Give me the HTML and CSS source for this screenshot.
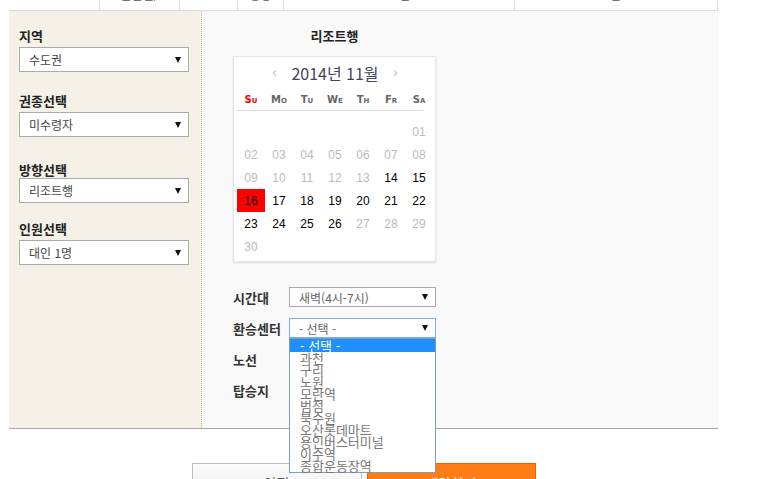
FILE: index.html
```html
<!DOCTYPE html>
<html lang="ko">

<head>
    <meta charset="UTF-8">
    <meta name="viewport" content="width=device-width, initial-scale=1.0">
    <title>리조트 셔틀 예약</title>
    <link rel="stylesheet" href="styles.css">
</head>

<body>
    <div class="page">
        <table class="summary">
            <tr>
                <td></td>
                <td>출발일/</td>
                <td></td>
                <td>방향</td>
                <td>노선</td>
                <td>요금표</td>
            </tr>
        </table>

        <div class="panel">
            <aside class="side">
                <div class="field">
                    <label>지역</label>
                    <div class="select"><span>수도권</span><i class="arrow"></i></div>
                </div>
                <div class="field">
                    <label>권종선택</label>
                    <div class="select"><span>미수령자</span><i class="arrow"></i></div>
                </div>
                <div class="field wide">
                    <label>방향선택</label>
                    <div class="select"><span>리조트행</span><i class="arrow"></i></div>
                </div>
                <div class="field last">
                    <label>인원선택</label>
                    <div class="select"><span>대인 1명</span><i class="arrow"></i></div>
                </div>
            </aside>

            <section class="main">
                <div class="cal-wrap">
                    <h3 class="cal-title">리조트행</h3>
                    <div class="calendar">
                        <div class="cal-head">
                            <span class="nav">&lsaquo;</span>
                            <span class="month">2014년 11월</span>
                            <span class="nav">&rsaquo;</span>
                        </div>
                        <div class="week">
                            <span class="sun">Su</span><span>Mo</span><span>Tu</span><span>We</span><span>Th</span><span>Fr</span><span>Sa</span>
                        </div>
                        <div class="days">
                            <span></span><span></span><span></span><span></span><span></span><span></span><span class="off">01</span>
                            <span class="off">02</span><span class="off">03</span><span class="off">04</span><span class="off">05</span><span class="off">06</span><span class="off">07</span><span class="off">08</span>
                            <span class="off">09</span><span class="off">10</span><span class="off">11</span><span class="off">12</span><span class="off">13</span><span>14</span><span>15</span>
                            <span class="picked">16</span><span>17</span><span>18</span><span>19</span><span>20</span><span>21</span><span>22</span>
                            <span>23</span><span>24</span><span>25</span><span>26</span><span class="off">27</span><span class="off">28</span><span class="off">29</span>
                            <span class="off">30</span>
                        </div>
                    </div>
                </div>

                <div class="form">
                    <div class="row">
                        <label>시간대</label>
                        <div class="select small"><span>새벽(4시-7시)</span><i class="arrow"></i></div>
                    </div>
                    <div class="row">
                        <label>환승센터</label>
                        <div class="select small focus"><span>- 선택 -</span><i class="arrow"></i>
                            <ul class="options">
                                <li class="hover">- 선택 -</li>
                                <li>과천</li>
                                <li>구리</li>
                                <li>노원</li>
                                <li>모란역</li>
                                <li>범점</li>
                                <li>북수원</li>
                                <li>오산롯데마트</li>
                                <li>용인버스터미널</li>
                                <li>이수역</li>
                                <li>종합운동장역</li>
                            </ul>
                        </div>
                    </div>
                    <div class="row">
                        <label>노선</label>
                        <div class="select small"><span>- 선택 -</span><i class="arrow"></i></div>
                    </div>
                    <div class="row">
                        <label>탑승지</label>
                        <div class="select small"><span>- 선택 -</span><i class="arrow"></i></div>
                    </div>
                </div>
            </section>
        </div>

        <div class="actions">
            <button class="btn">이전</button>
            <button class="btn primary">예약하기</button>
        </div>
    </div>
</body>

</html>
```

FILE: styles.css
```css
body,
ul,
h3 {
    margin: 0px;
    padding: 0px;
}

body {
    background: #fff;
    font-family: 'Noto Sans CJK KR', 'Noto Sans', sans-serif;
    color: #333;
}

.page {
    width: 709px;
    margin-left: 9px;
}

/* top summary table, scrolled mostly out of view */
.summary {
    width: 709px;
    height: 30px;
    margin-top: -19px;
    border-collapse: collapse;
    table-layout: fixed;
}

.summary td {
    border-right: 1px solid #ddd;
    border-bottom: 1px solid #ddd;
    vertical-align: bottom;
    padding: 0 0 7px;
    text-align: center;
    font-size: 12px;
    line-height: 16px;
    color: #555;
}

.summary td:nth-child(1) { width: 90px; }
.summary td:nth-child(2) { width: 79px; }
.summary td:nth-child(3) { width: 57px; }
.summary td:nth-child(4) { width: 45px; }
.summary td:nth-child(5) { width: 230px; }

.panel {
    display: flex;
    height: 417px;
    border-bottom: 1px solid #a6a6a6;
    background: #f9f9f9;
}

.side {
    width: 182px;
    padding: 17px 0 0 10px;
    background: #f5f1e7;
    border-right: 1px dotted #c6b79c;
}

.field label {
    display: block;
    font-size: 13px;
    font-weight: bold;
    line-height: 16px;
    color: #222;
    margin-bottom: 3px;
}

.field + .field {
    margin-top: 21px;
}

.field.wide {
    margin-top: 25px;
}

.field.wide label {
    margin-bottom: 0px;
}

.field.last {
    margin-top: 18px;
}

.select {
    position: relative;
    display: flex;
    align-items: center;
    justify-content: space-between;
    width: 170px;
    height: 25px;
    box-sizing: border-box;
    padding: 0 7px 0 9px;
    background: #fff;
    border: 1px solid #aaa;
    font-size: 12px;
    color: #444;
}

.arrow {
    width: 0;
    height: 0;
    border-left: 3px solid transparent;
    border-right: 3px solid transparent;
    border-top: 6px solid #111;
}

.main {
    flex: 1;
    padding: 17px 0 0 31px;
}

.cal-wrap {
    width: 203px;
}

.cal-title {
    text-align: center;
    font-size: 13px;
    line-height: 16px;
    color: #222;
    margin-bottom: 12px;
}

.calendar {
    box-sizing: border-box;
    width: 203px;
    height: 206px;
    padding: 0 2px 3px 3px;
    background: #fff;
    border: 1px solid #e6e6e6;
    box-shadow: 0 1px 2px rgba(0, 0, 0, 0.12);
}

.cal-head {
    display: flex;
    justify-content: center;
    align-items: center;
    gap: 14px;
    height: 32px;
}

.cal-head .nav {
    font-family: 'DejaVu Sans', sans-serif;
    font-size: 15px;
    color: #c4c4c4;
}

.cal-head .month {
    font-size: 16px;
    color: #48435a;
}

.week,
.days {
    display: grid;
    grid-template-columns: repeat(7, 28px);
}

.week {
    height: 20px;
    align-items: center;
    padding-bottom: 1px;
    border-bottom: 1px solid #ddd;
    margin: 0 10px 0 0;
}

.week span {
    text-align: center;
    font-family: 'DejaVu Sans', sans-serif;
    font-size: 10px;
    font-weight: bold;
    font-variant: small-caps;
    color: #666;
}

.week .sun {
    color: #f00;
}

.days {
    margin-top: 9px;
    grid-auto-rows: 23px;
}

.days span {
    display: flex;
    align-items: center;
    justify-content: center;
    font-family: 'Liberation Sans', sans-serif;
    font-size: 12px;
    color: #000;
}

.days .off {
    color: #bbb;
}

.days .picked {
    background: #f00;
}

.form {
    margin-top: 25px;
}

.row {
    display: flex;
    align-items: center;
    height: 20px;
}

.row + .row {
    margin-top: 11px;
}

.row label {
    width: 56px;
    font-size: 13px;
    font-weight: bold;
    color: #333;
}

.select.small {
    width: 147px;
    height: 20px;
    color: #666;
}

.select.focus {
    border-color: #7eaee6;
}

.options {
    position: absolute;
    top: 19px;
    left: -1px;
    width: 147px;
    box-sizing: border-box;
    list-style: none;
    background: #fff;
    border: 1px solid #7f9db9;
    z-index: 2;
}

.options li {
    height: 12px;
    line-height: 12px;
    padding-left: 10px;
    font-size: 13px;
    color: #777;
    white-space: nowrap;
}

.options li.hover {
    height: 13px;
    line-height: 14px;
    background: #1e90ff;
    color: #fff;
}

.actions {
    display: flex;
    justify-content: center;
    gap: 5px;
    margin-top: 34px;
}

.btn {
    width: 170px;
    height: 40px;
    font-family: inherit;
    font-size: 14px;
    color: #555;
    background: linear-gradient(#fbfbfb, #ececec);
    border: 1px solid #bdbdbd;
}

.btn.primary {
    width: 169px;
    color: #fff;
    background: #ff7d14;
    border-color: #ee6000;
}
```
